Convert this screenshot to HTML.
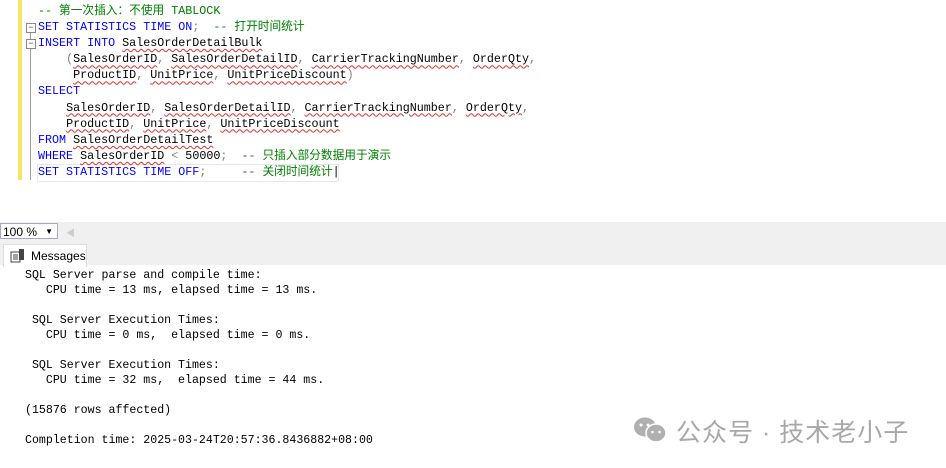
<!DOCTYPE html>
<html><head><meta charset="utf-8"><style>
body{margin:0;width:946px;height:468px;background:#fff;position:relative;overflow:hidden;font-family:"Liberation Mono","Noto Sans CJK SC",monospace;}
.ed{position:absolute;left:0;top:0;width:946px;height:222px;background:#fff;}
.ybar{position:absolute;left:18px;top:0;width:4px;height:180px;background:#f5e663;}
.gl{position:absolute;left:30px;top:30px;width:1px;height:150px;background:#a0a0a0;}
.code{position:absolute;left:38px;top:3px;font-size:11.7px;line-height:16.1px;white-space:pre;color:#000;}
.k{color:#0000ff}.c{color:#008000}.g{color:#808080}.r{color:#000}
.u{text-decoration:underline wavy #e03030;text-decoration-thickness:1px;text-underline-offset:2px}
.box{position:absolute;left:26px;width:8px;height:8px;border:1px solid #888;background:#fff;font-size:9px;line-height:8px;text-align:center;color:#444}
.band{position:absolute;left:0;top:222px;width:946px;height:18px;background:#f0f0f0;}
.zoom{position:absolute;left:0;top:223px;width:58px;height:16px;border:1px solid #a8a8c0;background:#fff;font:12px "Liberation Sans",sans-serif;line-height:16px;padding-left:2px;box-sizing:border-box}
.tabs{position:absolute;left:0;top:240px;width:946px;height:25px;background:#f0f0f0;}
.tab{position:absolute;left:3px;top:244px;width:82px;height:22px;background:#fff;border:1px solid #ddd;border-bottom:none;font:12px "Liberation Sans",sans-serif;line-height:22px;}
.msg{position:absolute;left:25px;top:268px;font-family:"Liberation Mono",monospace;font-size:11.6px;line-height:15px;white-space:pre;color:#000}
.wm{position:absolute;left:676px;top:413px;font:25px "Liberation Sans","Noto Sans CJK SC",sans-serif;color:#a8a8a8;letter-spacing:1px}
</style></head><body>
<div class="ed">
<div class="ybar"></div><div class="gl"></div>
<div class="box" style="top:23px">−</div>
<div class="box" style="top:39px">−</div>
<div style="position:absolute;left:37px;top:164px;width:300px;height:16px;border:1px solid #e8e8e8"></div>
<div class="code"><span class="c">-- 第一次插入：不使用 TABLOCK</span>
<span class="k">SET STATISTICS TIME ON</span><span class="g">;</span>  <span class="c">-- 打开时间统计</span>
<span class="k">INSERT INTO</span> <span class="u">SalesOrderDetailBulk</span>
    <span class="g">(</span><span class="u">SalesOrderID</span><span class="g">,</span> <span class="u">SalesOrderDetailID</span><span class="g">,</span> <span class="u">CarrierTrackingNumber</span><span class="g">,</span> <span class="u">OrderQty</span><span class="g">,</span>
     <span class="u">ProductID</span><span class="g">,</span> <span class="u">UnitPrice</span><span class="g">,</span> <span class="u">UnitPriceDiscount</span><span class="g">)</span>
<span class="k">SELECT</span>
    <span class="u">SalesOrderID</span><span class="g">,</span> <span class="u">SalesOrderDetailID</span><span class="g">,</span> <span class="u">CarrierTrackingNumber</span><span class="g">,</span> <span class="u">OrderQty</span><span class="g">,</span>
    <span class="u">ProductID</span><span class="g">,</span> <span class="u">UnitPrice</span><span class="g">,</span> <span class="u">UnitPriceDiscount</span>
<span class="k">FROM</span> <span class="u">SalesOrderDetailTest</span>
<span class="k">WHERE</span> <span class="u">SalesOrderID</span> <span class="g">&lt;</span> 50000<span class="g">;</span>  <span class="c">-- 只插入部分数据用于演示</span>
<span class="k">SET STATISTICS TIME OFF</span><span class="g">;</span>     <span class="c">-- 关闭时间统计</span>|</div>
</div>
<div class="band"></div>
<div class="zoom">100 % <span style="position:absolute;right:4px;font-size:8px">▼</span></div>
<div style="position:absolute;left:66px;top:226px;font-size:9px;color:#ccc">◀</div>
<div class="tabs"></div>
<div class="tab"><svg style="position:absolute;left:6px;top:4px" width="16" height="14" viewBox="0 0 16 14"><rect x="1" y="3" width="9" height="10" fill="#fff" stroke="#444"/><path d="M3 6h5M3 8h5M3 10h5" stroke="#444"/><rect x="9" y="0" width="5" height="11" fill="#444"/></svg><span style="position:absolute;left:27px">Messages</span></div>
<div class="msg">SQL Server parse and compile time: 
   CPU time = 13 ms, elapsed time = 13 ms.

 SQL Server Execution Times:
   CPU time = 0 ms,  elapsed time = 0 ms.

 SQL Server Execution Times:
   CPU time = 32 ms,  elapsed time = 44 ms.

(15876 rows affected)

Completion time: 2025-03-24T20:57:36.8436882+08:00</div>
<svg style="position:absolute;left:633px;top:416px" width="36" height="28" viewBox="0 0 36 28"><ellipse cx="12" cy="11" rx="11" ry="9.5" fill="#b0b0b0"/><ellipse cx="23" cy="17" rx="10" ry="9" fill="#b0b0b0" stroke="#fff" stroke-width="1.5"/><circle cx="8" cy="9" r="1.5" fill="#fff"/><circle cx="15" cy="9" r="1.5" fill="#fff"/><circle cx="19.5" cy="16" r="1.3" fill="#fff"/><circle cx="26.5" cy="16" r="1.3" fill="#fff"/></svg>
<div class="wm">公众号 · 技术老小子</div>
</body></html>
